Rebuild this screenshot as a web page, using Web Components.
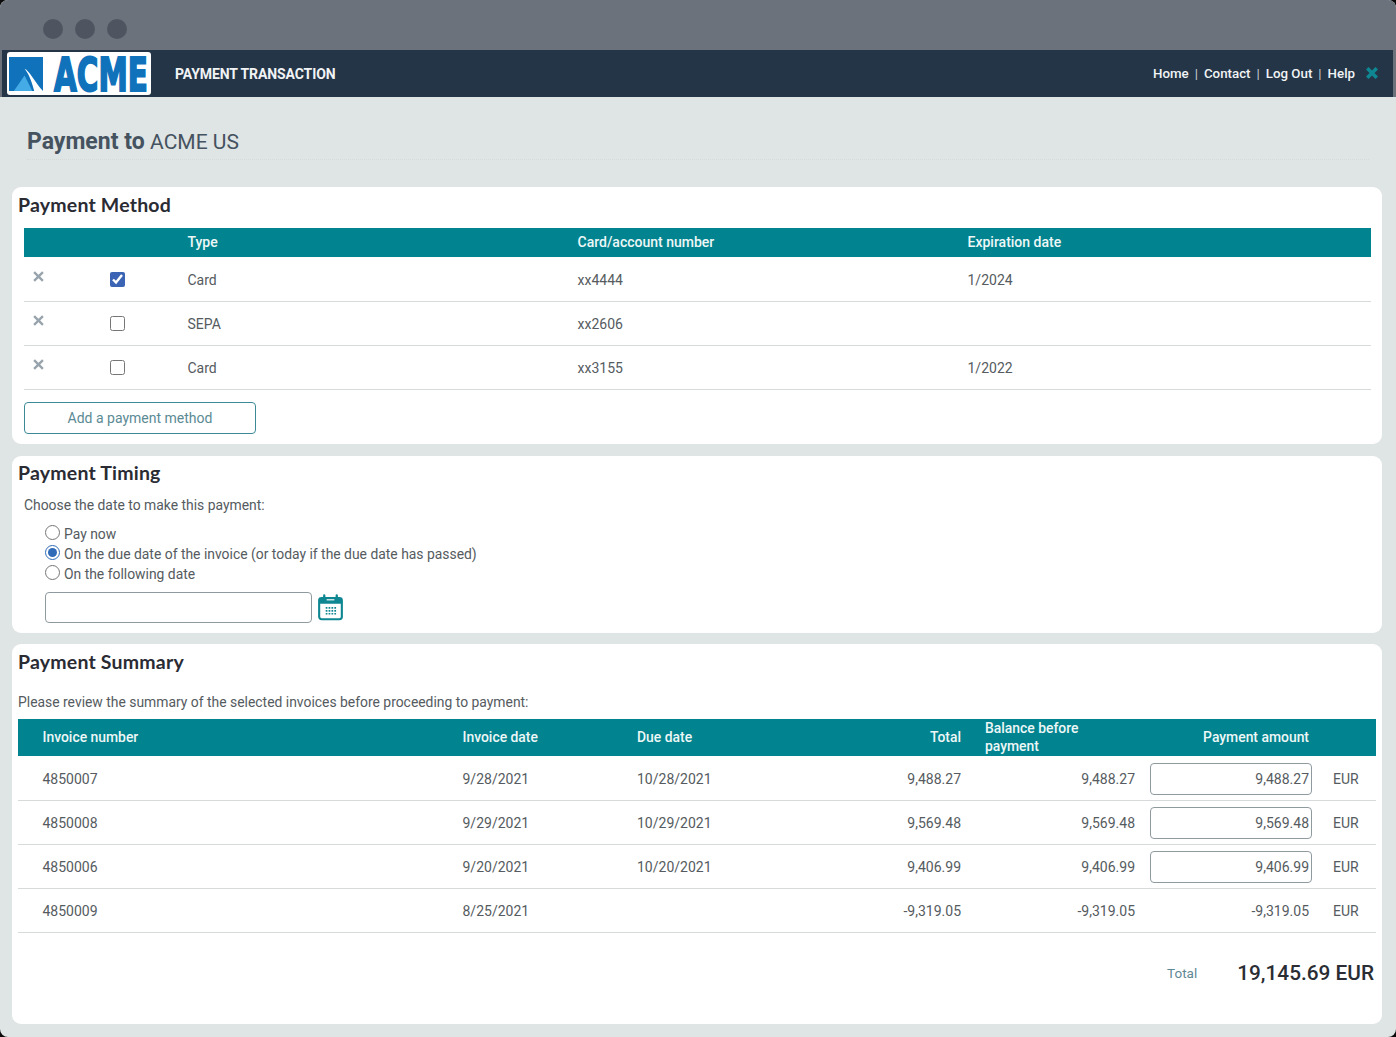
<!DOCTYPE html>
<html lang="en">
<head>
<meta charset="utf-8">
<title>Payment Transaction</title>
<style>
html, body { margin: 0; height: 100%; background: #0b0b0b; overflow: hidden; }
body { font-family: Roboto, "Liberation Sans", sans-serif; font-size: 14px; color: #555b60; }
</style>
</head>
<body>

<app-window>
  <browser-bar></browser-bar>
  <app-header></app-header>
  <page-title name="ACME US"></page-title>

  <section-card heading="Payment Method" style="--card-h:257px; --card-gap:12px">
    <method-table>
      <method-row checked type="Card" number="xx4444" expires="1/2024"></method-row>
      <method-row type="SEPA" number="xx2606"></method-row>
      <method-row type="Card" number="xx3155" expires="1/2022"></method-row>
    </method-table>
    <add-button>Add a payment method</add-button>
  </section-card>

  <section-card heading="Payment Timing" style="--card-h:177px; --head-pad:5px">
    <timing-form></timing-form>
  </section-card>

  <section-card heading="Payment Summary" style="--card-h:380px">
    <invoice-table>
      <invoice-row number="4850007" date="9/28/2021" due="10/28/2021" total="9,488.27" balance="9,488.27" amount="9,488.27" editable></invoice-row>
      <invoice-row number="4850008" date="9/29/2021" due="10/29/2021" total="9,569.48" balance="9,569.48" amount="9,569.48" editable></invoice-row>
      <invoice-row number="4850006" date="9/20/2021" due="10/20/2021" total="9,406.99" balance="9,406.99" amount="9,406.99" editable></invoice-row>
      <invoice-row number="4850009" date="8/25/2021" total="-9,319.05" balance="-9,319.05" amount="-9,319.05"></invoice-row>
    </invoice-table>
  </section-card>
</app-window>

<script>
/* small helper, every element below does the same thing in its constructor */
function shadow(el, html) {
  el.attachShadow({mode: 'open'}).innerHTML = html;
}

const xIcon = (weight) => `<svg viewBox="0 0 10 10" width="100%" height="100%"><path d="M1 1 L9 9 M9 1 L1 9" stroke="currentColor" stroke-width="${weight}" fill="none"/></svg>`;

class AppWindow extends HTMLElement {
  constructor() {
    super();
    shadow(this, `<style>
      :host { display: flex; flex-direction: column; height: 1037px; background: #dfe4e4; border-radius: 8px; overflow: hidden; }
    </style><slot></slot>`);
  }
}

class BrowserBar extends HTMLElement {
  constructor() {
    super();
    shadow(this, `<style>
      :host { display: flex; flex: none; height: 50px; box-sizing: border-box; padding: 19px 0 0 43px; gap: 12px; background: #6c727c; }
      i { width: 20px; height: 20px; border-radius: 50%; background: #4e5561; }
    </style><i></i><i></i><i></i>`);
  }
}

class AppHeader extends HTMLElement {
  constructor() {
    super();
    shadow(this, `<style>
      :host { display: flex; flex: none; align-items: center; height: 47px; padding: 0 15px 0 0; background: #233547; color: #f1f3f5; box-shadow: -2px 0 0 #6c727c, 3px 0 0 #6c727c; margin: 0 3px 0 2px; }
      .logo { display: flex; align-items: center; width: 144px; height: 43px; margin-left: 5px; box-sizing: border-box; background: #fff; border-radius: 3px; padding: 0 2px; }
      .logo svg { flex: none; width: 34px; height: 34px; }
      .word { flex: none; font: bold 46px/36px "DejaVu Sans", sans-serif; color: #0f72bb; -webkit-text-stroke: 2px #0f72bb; transform: scaleX(.64); transform-origin: 0 50%; margin: 2px -54px 0 11px; white-space: nowrap; }
      .title { margin-left: 24px; font-weight: 700; font-size: 14px; letter-spacing: -.1px; white-space: nowrap; }
      nav { margin-left: auto; margin-top: -1px; display: flex; align-items: center; gap: 6px; font-size: 13.3px; font-weight: 500; }
      nav b { font-weight: 400; color: #c9ced4; }
      .x { width: 12px; height: 12px; color: #0f8792; margin-left: 5px; }
    </style>
    <div class="logo">
      <svg viewBox="0 0 35 35"><rect width="35" height="35" fill="#0f72bb"/><path d="M5 35 L16 19 L24 35 Z" fill="#45abe6"/><path d="M16 12 C21 14 26 25 35 35 L26 35 C24 27 21 18 16 12 Z" fill="#fff"/></svg>
      <span class="word">ACME</span>
    </div>
    <span class="title">PAYMENT TRANSACTION</span>
    <nav><span>Home</span><b>|</b><span>Contact</span><b>|</b><span>Log Out</span><b>|</b><span>Help</span><span class="x">${xIcon(3)}</span></nav>`);
  }
}

class PageTitle extends HTMLElement {
  constructor() {
    super();
    shadow(this, `<style>
      :host { display: block; flex: none; height: 90px; box-sizing: border-box; padding: 31px 27px 0; }
      div { height: 31px; line-height: 27px; color: #45525f; border-bottom: 1px dotted #d5dada; }
      b { font-weight: 700; font-size: 23px; }
      span { font-size: 21px; font-weight: 400; margin-left: 2px; }
    </style><div><b>Payment to</b> <span>${this.getAttribute('name')}</span></div>`);
  }
}

class SectionCard extends HTMLElement {
  constructor() {
    super();
    shadow(this, `<style>
      :host { display: block; flex: none; height: var(--card-h); box-sizing: border-box; margin: 0 14px var(--card-gap, 11px) 12px; padding: 0 6px; background: #fff; border-radius: 9px; }
      h2 { margin: 0; height: 41px; padding-top: var(--head-pad, 6px); box-sizing: border-box; font: 700 19.5px/24px Lato, "Open Sans", sans-serif; letter-spacing: .2px; color: #2a2b33; }
    </style><h2>${this.getAttribute('heading')}</h2><slot></slot>`);
  }
}

class MethodTable extends HTMLElement {
  constructor() {
    super();
    shadow(this, `<style>
      :host { display: block; margin: 0 5px 0 6px; }
      .head { display: grid; grid-template-columns: 163.5px 390px 390px 1fr; height: 29px; padding-bottom: 1px; box-sizing: border-box; margin-bottom: 1px; align-items: center; background: #01848f; color: #eef7f7; font-weight: 500; font-size: 14px; }
      .head span:first-child { grid-column: 2; }
    </style><div class="head"><span>Type</span><span>Card/account number</span><span>Expiration date</span></div><slot></slot>`);
  }
}

class MethodRow extends HTMLElement {
  constructor() {
    super();
    const checked = this.hasAttribute('checked') ? 'checked' : '';
    shadow(this, `<style>
      :host { display: grid; grid-template-columns: 163.5px 390px 390px 1fr; height: 44px; box-sizing: border-box; border-bottom: 1px solid #d7dadb; align-items: center; color: #555b60; }
      .lead { height: 100%; display: flex; align-items: center; }
      .x { width: 11px; height: 11px; margin: -10px 0 0 9px; color: #98a4ad; }
      input { width: 15px; height: 15px; margin: 0 0 0 66px; accent-color: #3b64b4; }
    </style>
    <div class="lead"><span class="x">${xIcon(2.1)}</span><input type="checkbox" ${checked}></div>
    <span>${this.getAttribute('type')}</span>
    <span>${this.getAttribute('number')}</span>
    <span>${this.getAttribute('expires') || ''}</span>`);
  }
}

class AddButton extends HTMLElement {
  constructor() {
    super();
    shadow(this, `<style>
      :host { display: flex; width: 232px; height: 32px; margin: 12px 0 0 6px; box-sizing: border-box; align-items: center; justify-content: center; border: 1px solid #3d8a96; border-radius: 4px; color: #5b8a94; font-size: 14px; }
    </style><slot></slot>`);
  }
}

class TimingForm extends HTMLElement {
  constructor() {
    super();
    const options = [
      ['Pay now', ''],
      ['On the due date of the invoice (or today if the due date has passed)', 'checked'],
      ['On the following date', '']
    ];
    const dots = [];
    for (const y of [14, 17, 20]) for (const x of [8, 11, 14, 17]) dots.push(`M${x} ${y}h1.8`);
    shadow(this, `<style>
      :host { display: block; padding-left: 6px; color: #555b60; font-size: 13.9px; }
      p { margin: 0; height: 24px; line-height: 16px; }
      .options { padding-left: 21px; margin-top: 3px; }
      label { display: flex; align-items: center; height: 20px; gap: 4px; }
      input[type=radio] { width: 15px; height: 15px; margin: -3px 0 0 0; accent-color: #2f6bb8; }
      .date { display: flex; align-items: center; gap: 6px; margin: 8px 0 0 21px; }
      input[type=text] { width: 267px; height: 31px; box-sizing: border-box; padding: 0 4px; border: 1px solid #8f9a9e; border-radius: 4px; background: #fff; }
      svg { width: 25px; height: 27px; display: block; }
    </style>
    <p>Choose the date to make this payment:</p>
    <div class="options">
      ${options.map(o => `<label><input type="radio" name="when" ${o[1]}><span>${o[0]}</span></label>`).join('')}
    </div>
    <div class="date">
      <input type="text" aria-label="date">
      <svg viewBox="0 0 26 27" fill="none">
        <rect x="1.2" y="3.7" width="23.6" height="22" rx="2.5" stroke="#0f8792" stroke-width="2.2"/>
        <rect x="1" y="3.5" width="24" height="6" rx="1.5" fill="#0f8792"/>
        <path d="M6.5 1v5M19.5 1v5" stroke="#0f8792" stroke-width="2.4" stroke-linecap="round"/>
        <path d="M9 5.5h8" stroke="#fff" stroke-width="1.2"/>
        <path d="${dots.join('')}" stroke="#0f8792" stroke-width="1.8"/>
      </svg>
    </div>`);
  }
}

const INVOICE_COLS = '24.5px 420px 174.5px 174px 150px 174px 174px 1fr';

class InvoiceTable extends HTMLElement {
  constructor() {
    super();
    shadow(this, `<style>
      :host { display: block; }
      p { margin: 0; height: 34px; padding-top: 9px; box-sizing: border-box; line-height: 16px; font-size: 13.9px; color: #555b60; }
      .head { display: grid; grid-template-columns: ${INVOICE_COLS}; height: 37px; padding-bottom: 1px; box-sizing: border-box; margin-bottom: 1px; align-items: center; background: #01848f; color: #eef7f7; font-weight: 500; font-size: 13.9px; line-height: 18px; }
      .r { text-align: right; }
      .bal { padding-left: 24px; }
      .total { display: flex; justify-content: flex-end; align-items: center; height: 80px; padding-right: 2px; gap: 40px; }
      .total span { color: #5f8794; font-size: 13.5px; }
      .total b { font-size: 20.8px; font-weight: 500; color: #2a2d33; }
    </style>
    <p>Please review the summary of the selected invoices before proceeding to payment:</p>
    <div class="head">
      <span></span><span>Invoice number</span><span>Invoice date</span><span>Due date</span>
      <span class="r">Total</span><span class="bal">Balance before payment</span><span class="r">Payment amount</span>
    </div>
    <slot></slot>
    <div class="total"><span>Total</span><b>19,145.69 EUR</b></div>`);
  }
}

class InvoiceRow extends HTMLElement {
  constructor() {
    super();
    const a = n => this.getAttribute(n) || '';
    const amount = this.hasAttribute('editable')
      ? `<input type="text" value="${a('amount')}" aria-label="Payment amount">`
      : `<span>${a('amount')}</span>`;
    shadow(this, `<style>
      :host { display: grid; grid-template-columns: ${INVOICE_COLS}; height: 44px; box-sizing: border-box; border-bottom: 1px solid #d7dadb; align-items: center; color: #555b60; }
      .r { text-align: right; }
      input { width: 162px; height: 32px; box-sizing: border-box; padding: 0 2px 0 0; margin: 0 -3px 0 15px; border: 1px solid #8f9a9e; border-radius: 4px; text-align: right; font: inherit; color: inherit; background: #fff; display: block; }
      .cur { padding-left: 24px; }
    </style>
    <span></span><span>${a('number')}</span><span>${a('date')}</span><span>${a('due')}</span>
    <span class="r">${a('total')}</span><span class="r">${a('balance')}</span><span class="r">${amount}</span>
    <span class="cur">EUR</span>`);
  }
}

customElements.define('app-window', AppWindow);
customElements.define('browser-bar', BrowserBar);
customElements.define('app-header', AppHeader);
customElements.define('page-title', PageTitle);
customElements.define('section-card', SectionCard);
customElements.define('method-table', MethodTable);
customElements.define('method-row', MethodRow);
customElements.define('add-button', AddButton);
customElements.define('timing-form', TimingForm);
customElements.define('invoice-table', InvoiceTable);
customElements.define('invoice-row', InvoiceRow);
</script>
</body>
</html>
